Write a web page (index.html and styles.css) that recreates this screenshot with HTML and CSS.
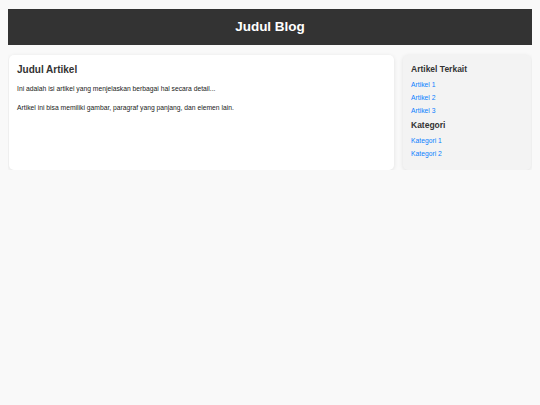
FILE: index.html
```html
<!DOCTYPE html>
<html lang="id">
<head>
<meta charset="utf-8">
<title>Judul Blog</title>
<link rel="stylesheet" href="styles.css">
</head>
<body>
<header class="site-header">
  <h1 class="site-title">Judul Blog</h1>
</header>
<div class="layout">
  <main class="article">
    <h2 class="article-title">Judul Artikel</h2>
    <p class="article-text">Ini adalah isi artikel yang menjelaskan berbagai hal secara detail...</p>
    <p class="article-text">Artikel ini bisa memiliki gambar, paragraf yang panjang, dan elemen lain.</p>
  </main>
  <aside class="sidebar">
    <h3 class="sidebar-title">Artikel Terkait</h3>
    <ul class="link-list">
      <li><a href="#">Artikel 1</a></li>
      <li><a href="#">Artikel 2</a></li>
      <li><a href="#">Artikel 3</a></li>
    </ul>
    <h3 class="sidebar-title">Kategori</h3>
    <ul class="link-list">
      <li><a href="#">Kategori 1</a></li>
      <li><a href="#">Kategori 2</a></li>
    </ul>
  </aside>
</div>
</body>
</html>
```

FILE: styles.css
```css
body {
  margin: 9px 8px 0;
  background: #f9f9f9;
  font-family: "Liberation Sans", Arial, sans-serif;
  font-size: 6.75px;
  color: #333;
}

.site-header {
  background: #333;
  color: #fff;
  height: 36px;
  display: flex;
  align-items: center;
  justify-content: center;
}

.site-title {
  margin: 0;
  font-size: 13.5px;
  font-weight: bold;
  line-height: 16px;
}

.layout {
  display: flex;
  gap: 9px;
  margin-top: 10px;
  padding: 0 1px;
}

.article {
  flex: 1;
  background: #fff;
  border-radius: 5px;
  box-shadow: 0 1px 4px rgba(0, 0, 0, 0.1);
  padding: 8px;
}

.article-title {
  margin: 1px 0 8.5px;
  font-size: 10px;
  line-height: 12px;
  color: #333;
}

.article-text {
  margin: 0 0 11px;
  line-height: 8px;
  color: #222;
}

.sidebar {
  width: 128px;
  box-sizing: border-box;
  background: #f3f3f3;
  border-radius: 5px;
  box-shadow: 0 1px 4px rgba(0, 0, 0, 0.1);
  padding: 8px 8px 8px;
}

.sidebar-title {
  margin: 1px 0 4px;
  font-size: 8.5px;
  line-height: 10px;
  color: #333;
}

.link-list {
  list-style: none;
  margin: 0 0 2.5px;
  padding: 0;
}

.link-list li {
  line-height: 13px;
}

.link-list a {
  color: #0a80ff;
  text-decoration: none;
}
```
